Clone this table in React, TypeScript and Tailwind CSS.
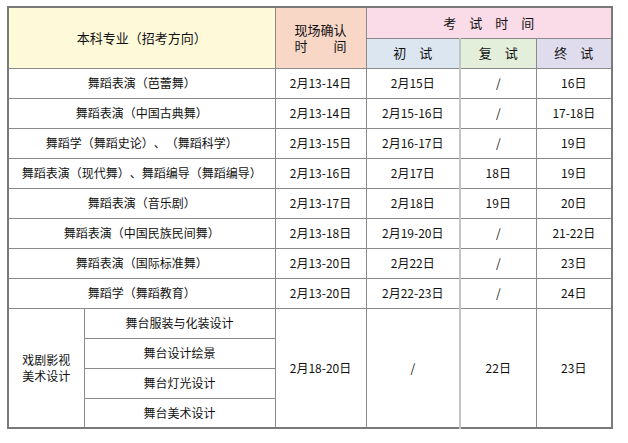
const rows: [string, string, string, string, string][] = [
  ['舞蹈表演（芭蕾舞）', '2月13-14日', '2月15日', '/', '16日'],
  ['舞蹈表演（中国古典舞）', '2月13-14日', '2月15-16日', '/', '17-18日'],
  ['舞蹈学（舞蹈史论）、（舞蹈科学）', '2月13-15日', '2月16-17日', '/', '19日'],
  ['舞蹈表演（现代舞）、舞蹈编导（舞蹈编导）', '2月13-16日', '2月17日', '18日', '19日'],
  ['舞蹈表演（音乐剧）', '2月13-17日', '2月18日', '19日', '20日'],
  ['舞蹈表演（中国民族民间舞）', '2月13-18日', '2月19-20日', '/', '21-22日'],
  ['舞蹈表演（国际标准舞）', '2月13-20日', '2月22日', '/', '23日'],
  ['舞蹈学（舞蹈教育）', '2月13-20日', '2月22-23日', '/', '24日'],
];

const stage = ['舞台服装与化装设计', '舞台设计绘景', '舞台灯光设计', '舞台美术设计'];

const cell = 'border border-[#8a8a8a] text-center align-middle p-0';

export default function App() {
  return (
    <div
      className="w-[628px] h-[443px] bg-white pt-[6px] pl-[7px] text-[#111] text-[12px] [text-spacing-trim:space-all]"
      style={{ fontFamily: '"Noto Sans CJK SC", "Noto Sans", sans-serif' }}
    >
      <table className="border-collapse border-2 border-[#7a7a7a] table-fixed w-[604px]">
        <colgroup>
          <col className="w-[76px]" />
          <col className="w-[191px]" />
          <col className="w-[91px]" />
          <col className="w-[94px]" />
          <col className="w-[76px]" />
          <col className="w-[76px]" />
        </colgroup>
        <thead>
          <tr className="h-[31px]">
            <th rowSpan={2} colSpan={2} className={`${cell} bg-[#fef9d9] font-normal text-[13px]`}>
              本科专业（招考方向）
            </th>
            <th rowSpan={2} className={`${cell} bg-[#f8d7c7] font-normal text-[13px] leading-[16px]`}>
              <div>现场确认</div>
              <div>时　　间</div>
            </th>
            <th colSpan={3} className={`${cell} bg-[#fadbe8] font-normal text-[13px]`}>
              考　试　时　间
            </th>
          </tr>
          <tr className="h-[30px]">
            <th className={`${cell} bg-[#dce6f0] font-normal text-[13px]`}>初　试</th>
            <th className={`${cell} border-l-2 border-l-[#c4c4c4] bg-[#e3eedb] font-normal text-[13px]`}>复　试</th>
            <th className={`${cell} bg-[#dfdcee] font-normal text-[13px]`}>终　试</th>
          </tr>
        </thead>
        <tbody>
          {rows.map((r, i) => (
            <tr key={i} className="h-[30px]">
              <td colSpan={2} className={cell}>{r[0]}</td>
              <td className={cell}>{r[1]}</td>
              <td className={cell}>{r[2]}</td>
              <td className={`${cell} border-l-2 border-l-[#c4c4c4]`}>{r[3]}</td>
              <td className={cell}>{r[4]}</td>
            </tr>
          ))}
          {stage.map((s, i) => (
            <tr key={s} className="h-[30px]">
              {i === 0 && (
                <td rowSpan={4} className={`${cell} leading-[16px]`}>
                  <div>戏剧影视</div>
                  <div>美术设计</div>
                </td>
              )}
              <td className={cell}>{s}</td>
              {i === 0 && (
                <>
                  <td rowSpan={4} className={cell}>2月18-20日</td>
                  <td rowSpan={4} className={cell}>/</td>
                  <td rowSpan={4} className={`${cell} border-l-2 border-l-[#c4c4c4]`}>22日</td>
                  <td rowSpan={4} className={cell}>23日</td>
                </>
              )}
            </tr>
          ))}
        </tbody>
      </table>
    </div>
  );
}
